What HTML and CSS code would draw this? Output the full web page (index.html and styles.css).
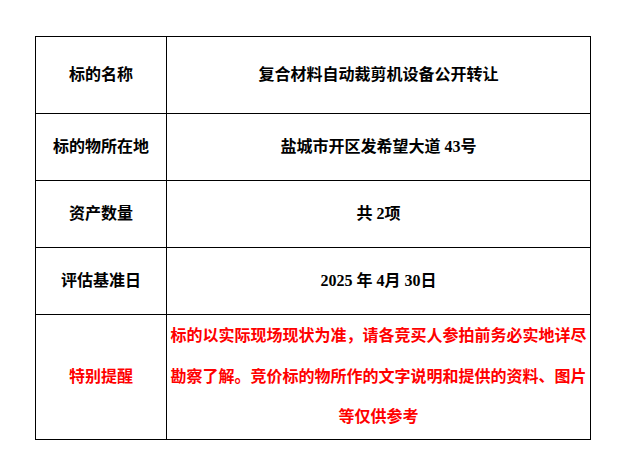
FILE: index.html
```html
<!DOCTYPE html>
<html lang="zh-CN">
<head>
<meta charset="utf-8">
<title>标的信息</title>
<link rel="stylesheet" href="styles.css">
</head>
<body>
<table class="info">
  <colgroup>
    <col class="col-label">
    <col class="col-value">
  </colgroup>
  <tbody>
    <tr class="row-first">
      <td class="label">标的名称</td>
      <td class="value">复合材料自动裁剪机设备公开转让</td>
    </tr>
    <tr class="row">
      <td class="label">标的物所在地</td>
      <td class="value">盐城市开区发希望大道 43号</td>
    </tr>
    <tr class="row">
      <td class="label">资产数量</td>
      <td class="value">共 2项</td>
    </tr>
    <tr class="row">
      <td class="label">评估基准日</td>
      <td class="value">2025 年 4月 30日</td>
    </tr>
    <tr class="row-note">
      <td class="label alert">特别提醒</td>
      <td class="value alert note">标的以实际现场现状为准，请各竞买人参拍前务必实地详尽勘察了解。竞价标的物所作的文字说明和提供的资料、图片等仅供参考</td>
    </tr>
  </tbody>
</table>
</body>
</html>
```

FILE: styles.css
```css
html, body {
  margin: 0;
  padding: 0;
  background: #ffffff;
}

.info {
  border-collapse: collapse;
  table-layout: fixed;
  width: 555px;
  margin: 36px 0 0 35px;
  font-family: "Liberation Serif", "Noto Sans CJK SC", serif;
  font-size: 16px;
  font-weight: bold;
  color: #000000;
}

.col-label {
  width: 131px;
}

.col-value {
  width: 424px;
}

.info td {
  border: 1px solid #000000;
  padding: 0 2px;
  text-align: center;
  vertical-align: middle;
  line-height: 20px;
}

.row-first {
  height: 77px;
}

.row {
  height: 67px;
}

.row-note {
  height: 125px;
}

.info td.note {
  line-height: 40.5px;
}

.info td.alert {
  color: #ff0000;
}
```
